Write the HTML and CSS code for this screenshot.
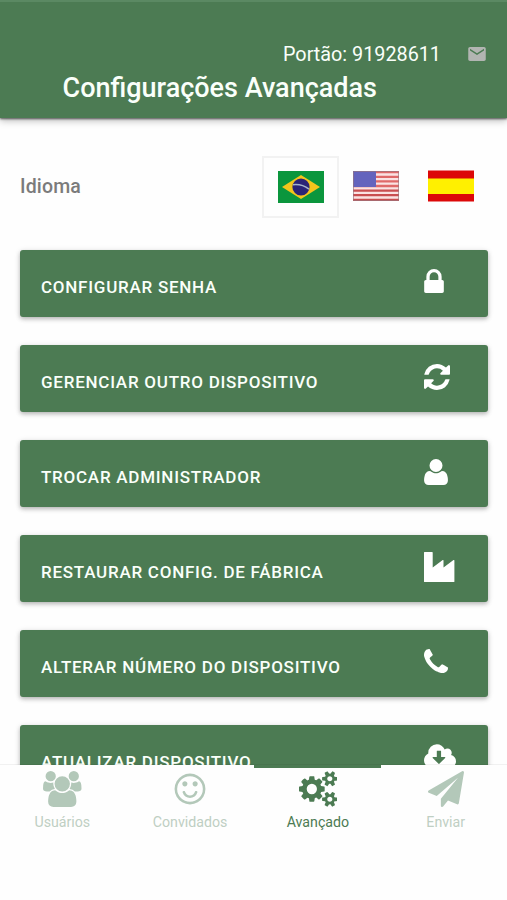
FILE: index.html
```html
<!DOCTYPE html>
<html lang="pt-BR">
<head>
<meta charset="utf-8">
<title>Configurações Avançadas</title>
<link rel="stylesheet" href="styles.css">
</head>
<body>
<div class="app">
  <header class="header">
    <div class="gate">
      <span>Portão: 91928611</span>
      <svg class="mail" viewBox="2 4 20 16"><path d="M20 4H4c-1.100 0-2 .9-2 2v12c0 1.100.9 2 2 2h16c1.100 0 2-.9 2-2V6c0-1.100-.9-2-2-2zm0 4l-8 5-8-5V6l8 5 8-5v2z"/></svg>
    </div>
    <h1 class="title">Configurações Avançadas</h1>
  </header>

  <main class="content">
    <div class="language">
      <span class="language-label">Idioma</span>
      <div class="flags">
        <button class="flag selected" aria-label="Português">
          <svg viewBox="0 0 46 32"><path fill="#0b963d" d="M0 0h46v32H0z"/><path fill="#f4c51c" d="M23 4l19 12-19 12L4 16z"/><circle cx="23" cy="16" r="8.600" fill="#2a2377"/><path d="M15 13.700q9-1 16 4.500" fill="none" stroke="#a6b5cb" stroke-width="1.500"/></svg>
        </button>
        <button class="flag" aria-label="English">
          <svg viewBox="0 0 46 32"><path fill="#fae3e3" d="M0 1h46v30H0z"/><path stroke="#df6969" stroke-width="2.300" d="M0 2.200h46M0 6.800h46M0 11.400h46M0 16h46"/><path stroke="#c94f51" stroke-width="2.300" d="M0 20.600h46M0 25.200h46M0 29.800h46"/><path fill="#6464bd" d="M0 1h23v16H0z"/><path fill="none" stroke="#96777e" stroke-opacity=".65" d="M.5 1.500h45v29H.5z"/></svg>
        </button>
        <button class="flag" aria-label="Español">
          <svg viewBox="0 0 46 32"><path fill="#dc0809" d="M0 .5h46v31H0z"/><path fill="#fff000" d="M0 8.500h46v15.500H0z"/></svg>
        </button>
      </div>
    </div>

    <div class="actions">
      <button class="action"><span>CONFIGURAR SENHA</span>
        <svg class="i-lock" viewBox="320 128 1152 1408"><path d="M640 768h512v-192q0-106-75-181t-181-75-181 75-75 181v192zm832 96v576q0 40-28 68t-68 28h-960q-40 0-68-28t-28-68v-576q0-40 28-68t68-28h32v-192q0-184 132-316t316-132 316 132 132 316v192h32q40 0 68 28t28 68z"/></svg></button>
      <button class="action"><span>GERENCIAR OUTRO DISPOSITIVO</span>
        <svg class="i-refresh" viewBox="128 128 1536 1536"><path d="M1639 1056q0 5-1 7-64 268-268 434.500t-478 166.500q-146 0-282.500-55t-243.500-157l-129 129q-19 19-45 19t-45-19-19-45v-448q0-26 19-45t45-19h448q26 0 45 19t19 45-19 45l-137 137q71 66 161 102t187 36q134 0 250-65t186-179q11-17 53-117 8-23 30-23h192q13 0 22.500 9.500t9.500 22.500zm25-800v448q0 26-19 45t-45 19h-448q-26 0-45-19t-19-45 19-45l138-138q-148-137-349-137-134 0-250 65t-186 179q-11 17-53 117-8 23-30 23h-199q-13 0-22.500-9.500t-9.500-22.500v-7q65-268 270-434.500t480-166.500q146 0 284 55.500t245 156.500l130-129q19-19 45-19t45 19 19 45z"/></svg></button>
      <button class="action"><span>TROCAR ADMINISTRADOR</span>
        <svg class="i-user" viewBox="192 128 1408 1536"><path d="M1600 1405q0 120-73 189.500t-194 69.500h-874q-121 0-194-69.500t-73-189.500q0-53 3.500-103.500t14-109 26.500-108.500 43-97.500 62-81 85.500-53.500 111.500-20q9 0 42 21.500t74.500 48 108 48 133.500 21.500 133.500-21.500 108-48 74.500-48 42-21.500q61 0 111.500 20t85.500 53.500 62 81 43 97.500 26.500 108.500 14 109 3.500 103.500zm-320-893q0 159-112.500 271.500t-271.500 112.500-271.500-112.500-112.500-271.500 112.500-271.500 271.500-112.500 271.500 112.500 112.500 271.500z"/></svg></button>
      <button class="action"><span>RESTAURAR CONFIG. DE FÁBRICA</span>
        <svg class="i-industry" viewBox="0 0 31 30"><path d="M.5 0h7.600q.6 0 .6.600v15l10-7.500q.8-.5.800.400v7.100l10-7.500q.9-.5.900.400v20.900q0 .6-.6.600H.6q-.6 0-.6-.6V.6q0-.6.500-.6z"/></svg></button>
      <button class="action"><span>ALTERAR NÚMERO DO DISPOSITIVO</span>
        <svg class="i-phone" viewBox="192 128 1408 1408"><path d="M1600 1240q0 27-10 70.500t-21 68.500q-21 50-122 106-94 51-186 51-27 0-53-3.500t-57.500-12.500-47-14.500-55.500-20.500-49-18q-98-35-175-83-127-79-264-216t-216-264q-48-77-83-175-3-9-18-49t-20.500-55.500-14.500-47-12.500-57.500-3.500-53q0-92 51-186 56-101 106-122 25-11 68.500-21t70.500-10q14 0 21 3 18 6 53 76 11 19 30 54t35 63.500 31 53.500q3 4 17.500 25t21.500 35.500 7 28.500q0 20-28.500 50t-62 55-62 53-28.500 46q0 9 5 22.500t8.500 20.500 14 24 11.500 19q76 137 174 235t235 174q2 1 19 11.500t24 14 20.500 8.500 22.500 5q18 0 46-28.500t53-62 55-62 50-28.500q14 0 28.500 7t35.500 21.500 25 17.500q25 15 53.500 31t63.500 35 54 30q70 35 76 53 3 7 3 21z"/></svg></button>
      <button class="action"><span>ATUALIZAR DISPOSITIVO</span>
        <svg class="i-cloud" viewBox="-64 128 1920 1408"><path d="M1216 928q0-14-9-23t-23-9h-224v-352q0-13-9.500-22.500t-22.500-9.500h-192q-13 0-22.500 9.500t-9.500 22.500v352h-224q-13 0-22.500 9.500t-9.500 22.500q0 14 9 23l352 352q9 9 23 9t23-9l351-351q10-12 10-24zm640 224q0 159-112.500 271.500t-271.500 112.500h-1088q-185 0-316.500-131.500t-131.500-316.500q0-130 70-240t188-165q-2-30-2-43 0-212 150-362t362-150q156 0 285.500 87t188.500 231q71-62 166-62 106 0 181 75t75 181q0 76-41 138 130 31 213.500 135.500t83.500 238.500z"/></svg></button>
    </div>
  </main>

  <nav class="tabs">
    <a class="tab">
      <svg class="wide" viewBox="-64 0 1920 1792"><path d="M529 896q-162 5-265 128h-134q-82 0-138-40.500t-56-118.500q0-353 124-353 6 0 43.500 21t97.500 42.500 119 21.500q67 0 133-23-5 37-5 66 0 139 81 256zm1071 637q0 120-73 189.500t-194 69.500h-874q-121 0-194-69.500t-73-189.500q0-53 3.500-103.500t14-109 26.500-108.500 43-97.500 62-81 85.500-53.500 111.500-20q10 0 43 21.500t73 48 107 48 135 21.500 135-21.500 107-48 73-48 43-21.500q61 0 111.500 20t85.500 53.500 62 81 43 97.500 26.500 108.500 14 109 3.500 103.500zm-1024-1277q0 106-75 181t-181 75-181-75-75-181 75-181 181-75 181 75 75 181zm704 384q0 159-112.500 271.500t-271.500 112.500-271.500-112.500-112.500-271.500 112.500-271.500 271.500-112.500 271.500 112.500 112.500 271.500zm576 225q0 78-56 118.500t-138 40.500h-134q-103-123-265-128 81-117 81-256 0-29-5-66 66 23 133 23 59 0 119-21.500t97.500-42.500 43.500-21q124 0 124 353zm-128-609q0 106-75 181t-181 75-181-75-75-181 75-181 181-75 181 75 75 181z"/></svg>
      <span>Usuários</span></a>
    <a class="tab">
      <svg viewBox="0 0 1792 1792"><path d="M1262 1075q-37 121-138 195t-228 74-228-74-138-195q-8-25 4-48.500t38-31.500q25-8 48.500 4t31.500 38q25 80 92.500 129.500t151.500 49.500 151.500-49.500 92.500-129.500q8-26 32-38t49-4 37 31.500 4 48.500zm-494-435q0 53-37.500 90.500t-90.500 37.500-90.500-37.500-37.500-90.500 37.500-90.500 90.500-37.500 90.500 37.500 37.500 90.500zm512 0q0 53-37.500 90.500t-90.500 37.500-90.500-37.500-37.500-90.500 37.500-90.500 90.500-37.500 90.500 37.500 37.500 90.500zm256 256q0-130-51-248.500t-136.500-204-204-136.500-248.500-51-248.500 51-204 136.500-136.500 204-51 248.500 51 248.500 136.500 204 204 136.500 248.500 51 248.500-51 204-136.500 136.500-204 51-248.500zm128 0q0 209-103 385.500t-279.500 279.500-385.500 103-385.500-103-279.500-279.500-103-385.500 103-385.500 279.500-279.500 385.500-103 385.500 103 279.500 279.500 103 385.500z"/></svg>
      <span>Convidados</span></a>
    <a class="tab active">
      <svg class="wide" viewBox="-64 0 1920 1792"><path d="M832 896q0-106-75-181t-181-75-181 75-75 181 75 181 181 75 181-75 75-181zm768 512q0-52-38-90t-90-38-90 38-38 90q0 53 37.500 90.500t90.500 37.500 90.500-37.500 37.500-90.500zm0-1024q0-52-38-90t-90-38-90 38-38 90q0 53 37.500 90.500t90.500 37.500 90.500-37.500 37.500-90.500zm-384 421v185q0 10-7 19.500t-16 10.500l-155 24q-11 35-32 76 34 48 90 115 7 11 7 20 0 12-7 19-23 30-82.500 89.500t-78.500 59.500q-11 0-21-7l-115-90q-37 19-77 31-11 108-23 155-7 24-30 24h-186q-11 0-20-7.500t-10-17.500l-23-153q-34-10-75-31l-118 89q-7 7-20 7-11 0-21-8-144-133-144-160 0-9 7-19 10-14 41-53t47-61q-23-44-35-82l-152-24q-10-1-17-9.500t-7-19.500v-185q0-10 7-19.500t16-10.500l155-24q11-35 32-76-34-48-90-115-7-11-7-20 0-12 7-20 22-30 82-89t79-59q11 0 21 7l115 90q34-18 77-32 11-108 23-154 7-24 30-24h186q11 0 20 7.500t10 17.500l23 153q34 10 75 31l118-89q8-7 20-7 11 0 21 8 144 133 144 160 0 8-7 19-12 16-42 54t-45 60q23 48 34 82l152 23q10 2 17 10.500t7 19.500zm640 533v140q0 16-149 31-12 27-30 52 51 113 51 138 0 4-4 7-122 71-124 71-8 0-46-47t-52-68q-20 2-30 2t-30-2q-14 21-52 68t-46 47q-2 0-124-71-4-3-4-7 0-25 51-138-18-25-30-52-149-15-149-31v-140q0-16 149-31 13-29 30-52-51-113-51-138 0-4 4-7 4-2 35-20t59-34 30-16q8 0 46 46.500t52 67.500q20-2 30-2t30 2q51-71 92-112l6-2q4 0 124 70 4 3 4 7 0 25-51 138 17 23 30 52 149 15 149 31zm0-1024v140q0 16-149 31-12 27-30 52 51 113 51 138 0 4-4 7-122 71-124 71-8 0-46-47t-52-68q-20 2-30 2t-30-2q-14 21-52 68t-46 47q-2 0-124-71-4-3-4-7 0-25 51-138-18-25-30-52-149-15-149-31v-140q0-16 149-31 13-29 30-52-51-113-51-138 0-4 4-7 4-2 35-20t59-34 30-16q8 0 46 46.500t52 67.500q20-2 30-2t30 2q51-71 92-112l6-2q4 0 124 70 4 3 4 7 0 25-51 138 17 23 30 52 149 15 149 31z"/></svg>
      <span>Avançado</span></a>
    <a class="tab">
      <svg viewBox="0 0 1792 1792"><path d="M1764 11q33 24 27 64l-256 1536q-5 29-32 45-14 8-31 8-11 0-24-5l-453-185-242 295q-18 23-49 23-13 0-22-4-19-7-30.500-23.500t-11.500-36.500v-349l864-1059-1069 925-395-162q-37-14-40-55-2-40 32-59l1664-960q15-9 32-9 20 0 36 11z"/></svg>
      <span>Enviar</span></a>
  </nav>
</div>
</body>
</html>
```
FILE: styles.css
```css
* {
  box-sizing: border-box;
}

body {
  margin: 0;
  font-family: Roboto, sans-serif;
  background: #fefefe;
}

button {
  font: inherit;
  border: 0;
  padding: 0;
  background: none;
}

.app {
  display: flex;
  flex-direction: column;
  height: 900px;
  overflow: hidden;
}

.header {
  flex: none;
  height: 118px;
  padding-top: 41px;
  background: #4c7b53;
  color: #fafffa;
  border-top: 2px solid #5b8963;
  box-shadow: 0 1px 2px rgba(0, 0, 0, .6), 0 3px 7px rgba(0, 0, 0, .25);
  z-index: 1;
}

.gate {
  display: flex;
  align-items: center;
  justify-content: flex-end;
  gap: 27px;
  height: 22px;
  padding-right: 21px;
  font-size: 19.800px;
}

.mail {
  width: 18px;
  height: 14px;
  fill: #b2b5b2;
}

.title {
  margin: 7px 0 0 62.500px;
  font-size: 27px;
  line-height: 32px;
  font-weight: 500;
}

.content {
  flex: none;
  height: 647px;
  padding: 38px 19px 0 20px;
  overflow: hidden;
}

.language {
  display: flex;
  align-items: center;
  justify-content: space-between;
  height: 62px;
}

.language-label {
  margin-bottom: 2px;
  font-size: 19.500px;
  font-weight: 500;
  color: #7b7b7b;
  letter-spacing: .15px;
}

.flags {
  display: flex;
  align-items: center;
}

.flag {
  display: flex;
  align-items: center;
  justify-content: center;
  width: 74.500px;
  height: 62px;
  padding-bottom: 3px;
}

.flag.selected {
  width: 77px;
  padding-bottom: 0;
  border: 2px solid #f2f2f2;
}

.flag svg {
  width: 46px;
  height: 32px;
}

.actions {
  display: flex;
  flex-direction: column;
  gap: 28px;
  margin-top: 32px;
}

.action {
  display: grid;
  grid-template-columns: 1fr 64px;
  align-items: start;
  height: 67px;
  padding: 19px 0 0 21px;
  border-radius: 3px;
  background: #4c7b53;
  box-shadow: 0 2px 4px rgba(0, 0, 0, .25), 0 1px 7px rgba(0, 0, 0, .08);
  color: #fafffa;
  font-size: 17px;
  font-weight: 500;
  line-height: 22px;
  letter-spacing: .75px;
  text-align: left;
}

.action span {
  margin-top: 6.500px;
}

.action svg {
  fill: #fff;
}

.i-lock {
  width: 20px;
  height: 24px;
}

.i-refresh {
  width: 26px;
  height: 26px;
}

.i-user {
  width: 24px;
  height: 26px;
}

.i-industry {
  width: 31px;
  height: 30px;
  margin-top: -2px;
}

.i-phone {
  width: 24px;
  height: 24px;
}

.i-cloud {
  width: 32px;
  height: 24px;
}

.tabs {
  flex: 1;
  display: grid;
  grid-template-columns: repeat(4, 127.800px);
  justify-content: center;
  background: #fefefe;
  box-shadow: 0 -1px 0 rgba(0, 0, 0, .05);
  z-index: 1;
}

.tab {
  display: flex;
  flex-direction: column;
  align-items: center;
  border-top: 3px solid transparent;
  padding: 3px 0 0 1px;
  color: #bfcfc3;
  font-size: 14.200px;
  line-height: 20px;
}

.tab svg {
  width: 36px;
  height: 36px;
  margin-bottom: 5px;
  fill: #b3c8b9;
}

.tab .wide {
  width: 38.500px;
}

.tab.active {
  border-color: #4c7b53;
  color: #4c7b53;
}

.tab.active svg {
  fill: #4c7b53;
}
```
